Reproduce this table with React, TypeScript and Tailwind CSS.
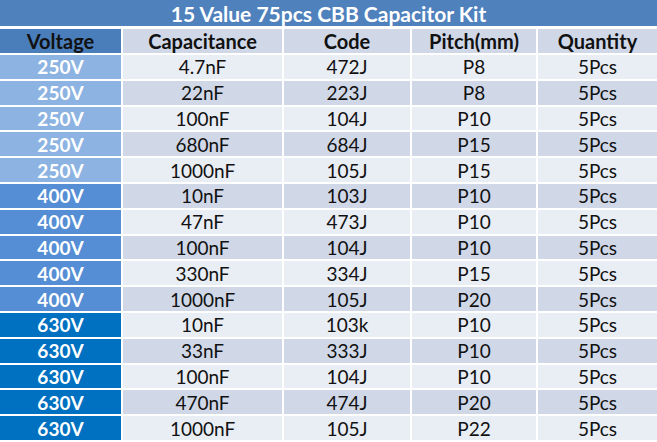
import React from "react";

const rows: [string, string, string, string][] = [
  ["250V", "4.7nF", "472J", "P8"],
  ["250V", "22nF", "223J", "P8"],
  ["250V", "100nF", "104J", "P10"],
  ["250V", "680nF", "684J", "P15"],
  ["250V", "1000nF", "105J", "P15"],
  ["400V", "10nF", "103J", "P10"],
  ["400V", "47nF", "473J", "P10"],
  ["400V", "100nF", "104J", "P10"],
  ["400V", "330nF", "334J", "P15"],
  ["400V", "1000nF", "105J", "P20"],
  ["630V", "10nF", "103k", "P10"],
  ["630V", "33nF", "333J", "P10"],
  ["630V", "100nF", "104J", "P10"],
  ["630V", "470nF", "474J", "P20"],
  ["630V", "1000nF", "105J", "P22"],
];

function voltBg(v: string) {
  if (v === "250V") return "bg-[#8db3e2]";
  if (v === "400V") return "bg-[#558ed5]";
  return "bg-[#0070c0]";
}

export default function App() {
  return (
    <div
      className="w-[657px] h-[442px] overflow-hidden bg-white"
      style={{ fontFamily: "Lato, 'Open Sans', sans-serif" }}
    >
      <div className="h-[26px] bg-[#4f81bd] flex items-center justify-center text-white font-bold text-[21px] leading-none">
        15 Value 75pcs CBB Capacitor Kit
      </div>
      <div className="mt-[3px] grid grid-cols-[121px_159px_126px_124px_1fr] gap-[2px]">
        <div className="h-[24px] bg-[#4a7ebb] flex items-center justify-center font-bold text-[20px] text-[#111] leading-none">
          Voltage
        </div>
        {["Capacitance", "Code", "Pitch(mm)", "Quantity"].map((h) => (
          <div
            key={h}
            className="h-[24px] bg-[#d0d8e8] flex items-center justify-center font-bold text-[20px] text-[#111] leading-none"
          >
            {h}
          </div>
        ))}
        {rows.map((r, i) => {
          const cellBg = i % 2 === 0 ? "bg-[#e9edf4]" : "bg-[#d0d8e8]";
          return (
            <React.Fragment key={i}>
              <div
                className={`h-[23.8px] ${voltBg(r[0])} flex items-center justify-center font-bold text-[19px] text-white leading-none`}
              >
                {r[0]}
              </div>
              {[r[1], r[2], r[3], "5Pcs"].map((c, j) => (
                <div
                  key={j}
                  className={`h-[23.8px] ${cellBg} flex items-center justify-center text-[19px] text-[#111] leading-none`}
                >
                  {c}
                </div>
              ))}
            </React.Fragment>
          );
        })}
      </div>
    </div>
  );
}
